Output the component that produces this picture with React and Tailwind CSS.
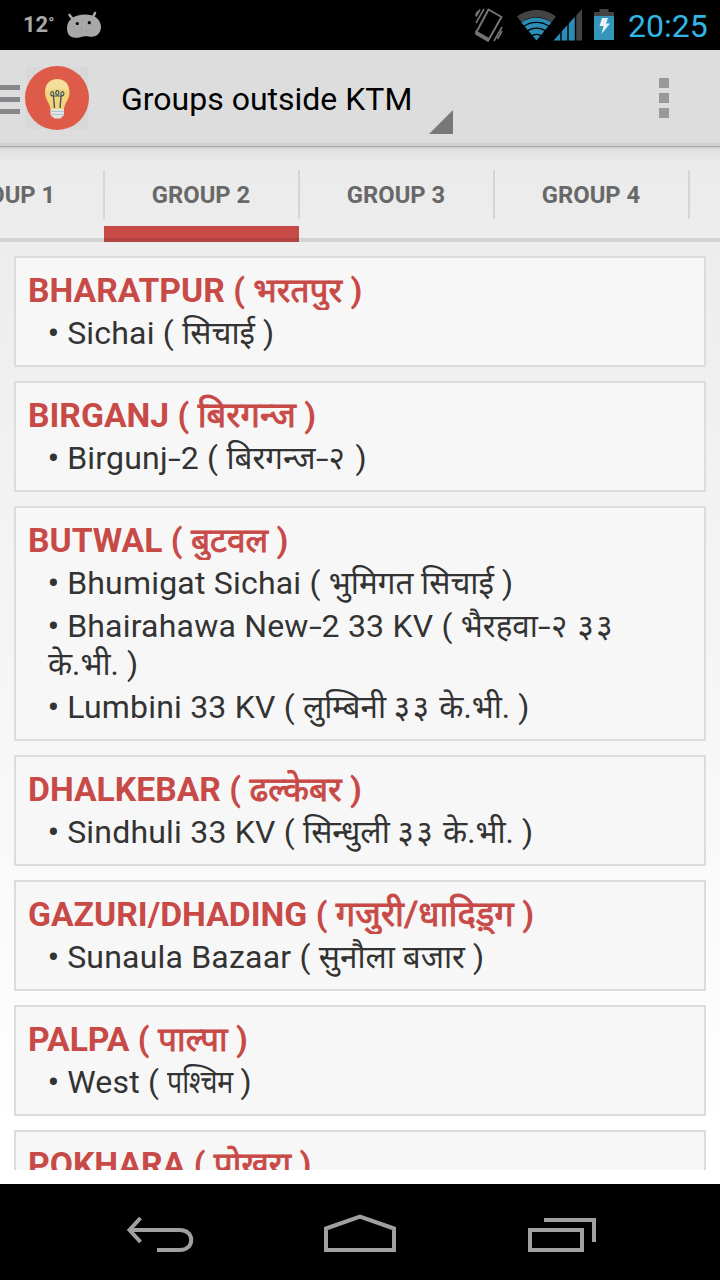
const groups = [
  { en: "BHARATPUR", ne: "भरतपुर", items: [["Sichai", "सिचाई"]] },
  { en: "BIRGANJ", ne: "बिरगन्ज", wide: true, items: [["Birgunj-2", "बिरगन्ज-२"]] },
  {
    en: "BUTWAL",
    ne: "बुटवल",
    items: [
      ["Bhumigat Sichai", "भुमिगत सिचाई"],
      ["Bhairahawa New-2 33 KV", "भैरहवा-२ ३३ के.भी."],
      ["Lumbini 33 KV", "लुम्बिनी ३३ के.भी."],
    ],
  },
  { en: "DHALKEBAR", ne: "ढल्केबर", items: [["Sindhuli 33 KV", "सिन्धुली ३३ के.भी."]] },
  { en: "GAZURI/DHADING", ne: "गजुरी/धादिड़्ग", wide: true, items: [["Sunaula Bazaar", "सुनौला बजार"]] },
  { en: "PALPA", ne: "पाल्पा", items: [["West", "पश्चिम", "inline-block w-[65px] origin-left scale-x-[0.85]"]] },
  { en: "POKHARA", ne: "पोखरा", items: [] },
];

function StatusBar() {
  return (
    <div className="flex h-[50px] shrink-0 items-center bg-black">
      <span className="ml-[23px] w-[44px] whitespace-nowrap pt-px text-[22px] font-bold leading-[50px] text-[#a8a8a8]">
        12<span className="relative -top-[3px] text-[16px]">°</span>
      </span>
      <svg className="h-[50px] w-[35px]" viewBox="67 0 35 50">
        <path d="M69.500 15l4 5M95 13l-2.500 5" stroke="#a8a8a8" strokeWidth="2.600" strokeLinecap="round" />
        <path d="M85 14.500c9 0 16 4.500 16 12.500 0 6-4.500 10-9.500 9.700-3-.2-5-.9-8-.3-3.500.8-5 1.300-8 1.300-5.500 0-8.500-3.500-8.500-9.700 0-8.500 8-13.500 18-13.500z" fill="#a8a8a8" />
        <circle cx="77.300" cy="23.500" r="1.600" />
        <circle cx="89.300" cy="22.700" r="1.600" />
        <path d="M81 28h1M81 31h1M86 31h1" stroke="#888" />
      </svg>
      <svg className="ml-auto h-[50px] w-[145px]" viewBox="473 0 145 50" fill="none">
        <g stroke="#747474" strokeWidth="1.600">
          <path d="M488.500 9.500l13 7.500-13 23-12.500-7z" strokeLinejoin="round" strokeWidth="2" />
          <path d="M476 31.500l13 7.300-1 2.200-12-7z" fill="#747474" />
          <path d="M484 9l-8 14M480 9.500l-4 7M478 11l-2.500 4.500M502 27l-8 14M502 31l-4.500 8" />
        </g>
        <path d="M517 16.500c11-8.700 28-8.700 39 0l-4.500 5.700c-8.500-6.500-21.500-6.500-30 0z" fill="#444" />
        <path d="M521.300 22.500c8.500-6.500 21.500-6.500 30.200 0l-15 18z" fill="#2b8db5" />
        <path d="M523.500 26.500c7.500-5.500 18.500-5.500 26 0M527 31.200c5.500-4 13.500-4 19 0M531 36c3-2.200 8-2.200 11 0" stroke="black" strokeWidth="1.300" />
        <path d="M576 15.500l6-6.500v31.500h-6z" fill="#444" />
        <path d="M553.500 40.500l21.500-24v24z" fill="#2b8db5" />
        <path d="M561 30v11M568 22v19M575.500 14v27" stroke="black" strokeWidth="1.400" />
        <path d="M594 12h5.500V9h9v3h5.500v4.500h-20z" fill="#444" />
        <path d="M594 16h20v24h-20z" fill="#3596bb" />
        <path d="M602 18h6l-2 5.500h4L601.500 34l2-8h-4z" fill="#e6f2f6" />
      </svg>
      <span className="ml-[10px] w-[92px] pt-[2px] text-[32px] leading-[50px] text-[#33b5e5]">20:25</span>
    </div>
  );
}

function ActionBar() {
  return (
    <div className="flex h-[97px] shrink-0 items-center border-b border-[#a5a5a5] bg-[linear-gradient(#ddd_93px,#d1d1d1_93px)]">
      <svg className="h-[96px] w-[90px]" viewBox="0 50 90 96" fill="none">
        <path d="M0 87.500h20M0 99.500h20M0 111.500h20" stroke="#858689" strokeWidth="5" />
        <path d="M26 67h62v62H26z" fill="#d8d8d8" />
        <circle cx="57" cy="98" r="32" fill="#de5b49" />
        <path d="M50.500 109c-.5-6-5.500-9-5.500-17 0-8 5-13 12.300-13S69.500 84 69.500 92c0 8-5 11-5.500 17z" fill="#f2d57a" />
        <path d="M46 91c0-8 5-11.500 11.300-11.500S68.500 83 68.500 91c-5-3-17-3-22.500 0z" fill="#f5df9c" />
        <path d="M54.500 108l-1-12M60 108l1-12" stroke="#46545b" strokeWidth="1.400" />
        <path d="M51.500 96h11.500" stroke="#46545b" strokeWidth="1" />
        <g stroke="#3d5560" strokeWidth="1.200">
          <ellipse cx="52.200" cy="93.700" rx="1.500" ry="2" />
          <ellipse cx="57.300" cy="92.800" rx="1.500" ry="2.200" />
          <ellipse cx="62.400" cy="93.700" rx="1.500" ry="2" />
        </g>
        <path d="M50.500 109H64v6l-3.500 3.500h-6l-4-3.500z" fill="#e0e3e5" />
        <path d="M50.500 111.500H64M50.500 114.500H64" stroke="#b9bfc3" />
      </svg>
      <h1 className="ml-[31px] w-[308px] whitespace-nowrap pt-[2px] text-[32px] leading-[38px] text-black">Groups outside KTM</h1>
      <svg className="h-6 w-6 translate-y-[24px]" viewBox="0 0 24 24">
        <path d="M24 0v24H0z" fill="#787878" />
      </svg>
      <div className="ml-auto mr-[51px] flex flex-col gap-[5px]">
        <i className="size-[10px] bg-[#999]" />
        <i className="size-[10px] bg-[#999]" />
        <i className="size-[10px] bg-[#999]" />
      </div>
    </div>
  );
}

function Tabs() {
  return (
    <nav className="flex h-[95px] shrink-0 overflow-hidden bg-[linear-gradient(#ccc_0,#e0e0e0_3px,#ebebeb_16px,transparent_40px)]">
      <div className="-ml-[91px] flex h-[95px]">
        {["GROUP 1", "GROUP 2", "GROUP 3", "GROUP 4", ""].map((tab, i) => (
          <div
            key={i}
            className={
              i === 1
                ? "flex w-[195px] shrink-0 flex-col border-b-4 border-[#b34342] bg-[linear-gradient(transparent_79px,#c84a47_79px)] pt-[23px]"
                : "flex w-[195px] shrink-0 flex-col border-b-4 border-[#d4d4d4] pt-[23px]"
            }
          >
            <span className="-mr-px flex h-[49px] items-center justify-center border-r-2 border-[#d5d5d5] pt-[2px] text-[23.800px] font-bold text-[#686868]">{tab}</span>
          </div>
        ))}
      </div>
    </nav>
  );
}

/* Widens hyphens and spaces out Devanagari digits; other characters are set as they are. */
function Spaced({ text }) {
  return text.split(/(-|[०-९]+)/).map((part, i) => {
    if (part === "-")
      return (
        <span key={i} className="inline-block w-[13px] leading-none">
          <span className="inline-block origin-left scale-x-[1.45] leading-none">-</span>
        </span>
      );
    if (/^[०-९]/.test(part))
      return (
        <span key={i} className="tracking-[2.500px]">
          {part}
        </span>
      );
    return part;
  });
}

function GroupCard({ group }) {
  return (
    <section className="shrink-0 border-2 border-[#dcdcdc] bg-[#f7f7f7] px-3 py-[13px] text-[32px] leading-[38px]">
      <h2 className="-mt-2 h-[47px] overflow-hidden pt-2 text-[33.700px] font-bold leading-[40px] text-[#c84a47]">
        {group.en} ({" "}
        <span
          className={
            group.wide
              ? "text-[34.600px] font-normal leading-none [-webkit-text-stroke:0.9px_#c84a47]"
              : "text-[33.400px] font-normal leading-none [-webkit-text-stroke:0.9px_#c84a47]"
          }
        >
          {group.ne}
        </span>{" "}
        )
      </h2>
      {group.items.map(([en, ne, fit]) => (
        <p key={en} className="mt-1 pl-5 pr-5 tracking-[0.200px] text-[#333] not-first-of-type:mt-[5px]">
          <span className="inline-block scale-110 leading-none">•</span> <Spaced text={en} /> ({" "}
          <span className="text-[31.400px] leading-none tracking-normal">
            {fit ? <span className={fit}>{ne}</span> : <Spaced text={ne} />}
          </span>{" "}
          )
        </p>
      ))}
    </section>
  );
}

function NavigationBar() {
  return (
    <div className="flex h-24 shrink-0 bg-black">
      <svg className="h-24 w-full" viewBox="0 1184 720 96" fill="none" stroke="#a0a0a0" strokeWidth="4">
        <path d="M140.500 1218l-11 12 11 12M130 1230h50c15 0 15 20 0 20h-23" />
        <path d="M326 1250v-21.500l34-12 34 12v21.500z" />
        <path d="M530 1230h52v20h-52zM544 1220h50v22" />
      </svg>
    </div>
  );
}

export default function App() {
  return (
    <div className="flex h-[1280px] w-[720px] flex-col overflow-hidden bg-[linear-gradient(#e8e8e8_50px,#ededed_250px,#fff_1130px)] font-[Roboto,'Noto_Sans',sans-serif]">
      <StatusBar />
      <ActionBar />
      <Tabs />
      <main className="mx-[14px] mb-[14px] mt-[14px] flex min-h-0 flex-1 flex-col gap-[14px] overflow-hidden">
        {groups.map((group) => (
          <GroupCard key={group.en} group={group} />
        ))}
      </main>
      <NavigationBar />
    </div>
  );
}
